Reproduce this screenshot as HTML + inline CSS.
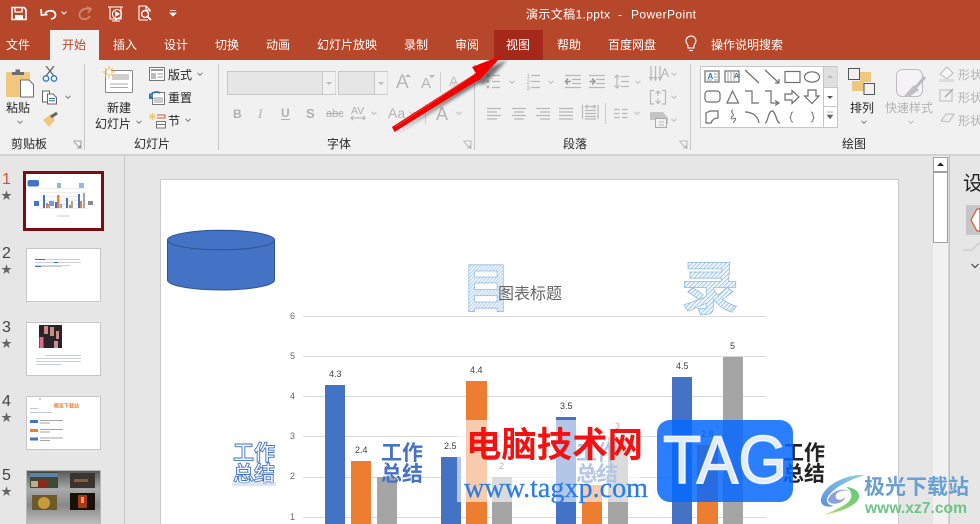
<!DOCTYPE html>
<html lang="zh"><head><meta charset="utf-8"><title>演示文稿1.pptx - PowerPoint</title>
<style>
html,body{margin:0;padding:0;width:980px;height:524px;overflow:hidden;background:#e6e6e6}
svg{display:block;font-family:"Liberation Sans","Noto Sans CJK SC",sans-serif}
.t{font-size:12px;fill:#fff}
.k{font-size:12px;fill:#262626}
.g{font-size:12px;fill:#b4b4b4}
.ic{fill:none;stroke:#6e6e6e;stroke-width:1.2}
.d{fill:none;stroke:#b8b8b8;stroke-width:1.2}
.ax{font-size:9px;fill:#666}
.dl{font-size:9px;fill:#404040}
</style></head><body>
<svg width="980" height="524" viewBox="0 0 980 524" xmlns="http://www.w3.org/2000/svg">
<defs>
<path id="c" d="M-2.5 -1.2L0 1.3L2.5 -1.2" fill="none" stroke="#777" stroke-width="1"/>
<path id="cg" d="M-2.5 -1.2L0 1.3L2.5 -1.2" fill="none" stroke="#bbb" stroke-width="1"/>
<pattern id="h" width="3" height="3" patternUnits="userSpaceOnUse" patternTransform="rotate(45)"><rect width="3" height="3" fill="#f4f8fd"/><rect width="1" height="3" fill="#a4c8ea"/></pattern>
<clipPath id="cl"><rect x="440" y="240" width="320" height="76"/></clipPath>
<clipPath id="r1"><rect x="160" y="180" width="738" height="344"/></clipPath>
<filter id="sh" x="-20%" y="-20%" width="140%" height="140%"><feGaussianBlur stdDeviation="1.6"/></filter>
<linearGradient id="tg" x1="0" y1="0" x2="0" y2="1"><stop offset="0" stop-color="#555"/><stop offset=".35" stop-color="#aaa"/><stop offset=".65" stop-color="#888"/><stop offset="1" stop-color="#c0c0c0"/></linearGradient>
<linearGradient id="sw1" x1="1" y1="0" x2="0" y2="1"><stop offset="0" stop-color="#8fd0ee"/><stop offset="1" stop-color="#5c92d6"/></linearGradient>
<linearGradient id="sw2" x1="1" y1="0" x2="0" y2="1"><stop offset="0" stop-color="#63c77f"/><stop offset=".7" stop-color="#8ed36e"/><stop offset="1" stop-color="#ece66a"/></linearGradient>
</defs>

<!-- chrome -->
<rect width="980" height="60" fill="#b7472a"/>
<rect y="60" width="980" height="94" fill="#f1f1f1"/>
<rect y="154" width="980" height="2" fill="#d2d2d2"/>
<rect y="156" width="980" height="368" fill="#e6e6e6"/>
<rect x="50" y="30" width="49" height="30" fill="#f1f1f1"/>
<rect x="494" y="30" width="49" height="30" fill="#a5291a"/>

<!-- QAT -->
<g fill="none" stroke="#fff" stroke-width="1.6">
<path d="M12 7.5H24L26 9.5V19.500H12Z"/><path d="M15 8V12H22V8" stroke-width="1.3"/><rect x="15" y="15" width="8" height="4.500" fill="#fff" stroke="none"/>
<path d="M45 13.500C48 9.500 55 10 55.500 14.500C55.700 17 54 18.500 51 19" stroke-width="1.800"/><path d="M41 9L41.500 15L47.500 14.500" stroke-width="1.800"/>
</g>
<path d="M61.500 11.500L64 14L66.500 11.500" fill="none" stroke="#fff"/>
<g fill="none" stroke="#cf8672" stroke-width="1.800"><path d="M90 9C82 7 78 13 80 17C82 20 88 20 90 16"/><path d="M87 7L91 9L88 13"/></g>
<g fill="none" stroke="#fff" stroke-width="1.100">
<path d="M108 7H123M110 7V19H121V7M116 19V21M112 21H120"/><circle cx="117" cy="14" r="4.500"/><path d="M115.800 12V16L119 14Z" fill="#fff"/>
<path d="M139 20V6H146L150 10V12M139 20H148M146 6V10H150"/><circle cx="145" cy="14" r="3.400" stroke-width="1.400"/><path d="M147.500 16.500L151 20" stroke-width="1.800"/>
</g>
<path d="M170 10.500H176M170 13H176L173 16Z" fill="#fff" stroke="#fff" stroke-width=".8"/>

<text class="t" x="526" y="18.500" textLength="84">演示文稿1.pptx</text>
<text class="t" x="618" y="18.500">-</text>
<text class="t" x="631" y="18.500" textLength="65">PowerPoint</text>

<!-- tabs -->
<text class="t" x="6" y="49">文件</text>
<text class="t" x="62" y="49" style="fill:#b7472a">开始</text>
<text class="t" x="113" y="49">插入</text>
<text class="t" x="164" y="49">设计</text>
<text class="t" x="215" y="49">切换</text>
<text class="t" x="266" y="49">动画</text>
<text class="t" x="317" y="49">幻灯片放映</text>
<text class="t" x="404" y="49">录制</text>
<text class="t" x="455" y="49">审阅</text>
<text class="t" x="506" y="49">视图</text>
<text class="t" x="557" y="49">帮助</text>
<text class="t" x="608" y="49">百度网盘</text>
<g fill="none" stroke="#fff" stroke-width="1.100"><path d="M688 48V46C688 44 686 43.500 686 41A5 5 0 1 1 696 41C696 43.500 694 44 694 46V48Z"/><path d="M689 50.500H693"/></g>
<text class="t" x="711" y="49">操作说明搜索</text>

<!-- ribbon dividers -->
<g fill="#c6c6c6"><rect x="84" y="64" width="1" height="86"/><rect x="218" y="64" width="1" height="86"/><rect x="474" y="64" width="1" height="86"/><rect x="690" y="64" width="1" height="86"/></g>

<!-- clipboard -->
<rect x="6" y="72" width="24" height="25" rx="1.500" fill="#efc77f"/>
<path d="M12 75V72H15.500V69.500H20V72H24V75Z" fill="#6e6e6e"/>
<path d="M20.500 80H29L33.500 84.500V97H20.500Z" fill="#fff" stroke="#6e6e6e"/>
<text class="k" x="6" y="112">粘贴</text>
<use href="#c" x="20" y="122"/>
<g fill="none"><path d="M46 66L54 76M54 66L46 76" stroke="#666" stroke-width="1.300"/><circle cx="46" cy="78.500" r="2.700" stroke="#2e75b6" stroke-width="1.300"/><circle cx="54" cy="78.500" r="2.700" stroke="#2e75b6" stroke-width="1.300"/></g>
<g fill="#fff" stroke="#666"><path d="M42.500 91H49.500V102H42.500Z"/><path d="M47.500 94H53L56.500 97.500V104H47.500Z"/></g><path d="M49 98.500H55M49 100.800H55" stroke="#2e75b6"/>
<use href="#c" x="68" y="97"/>
<path d="M43 120L51 114L55 120L49 127Z" fill="#efc77f"/><path d="M51 117L57 113" stroke="#666" stroke-width="3"/>
<text class="k" x="11" y="148">剪贴板</text>
<g style="stroke:#888;stroke-width:.8" fill="none"><path d="M73 141H81V149M74 142L80 148M77 148H80V145"/></g>

<!-- slides -->
<rect x="105.500" y="70.500" width="27" height="22" rx="1" fill="#fff" stroke="#888"/>
<rect x="112" y="74" width="17" height="6" fill="#cfcfcf"/><path d="M110 84H128M110 87.500H128" stroke="#aaa"/>
<g stroke="#efc77f" stroke-width="1.500"><path d="M109 66V78M103 72H115M105 68L113 76M113 68L105 76"/></g><circle cx="109" cy="72" r="2.200" fill="#fff"/>
<text class="k" x="107" y="112">新建</text>
<text class="k" x="95" y="128">幻灯片</text>
<use href="#c" x="139" y="122"/>
<g><rect x="149.500" y="67.500" width="15" height="13" fill="#fff" stroke="#777"/><rect x="151" y="69" width="12" height="2" fill="#999"/><rect x="151" y="73" width="5" height="6" fill="#bbb"/><path d="M157.500 74H163M157.500 77H163" stroke="#999"/></g>
<text class="k" x="168" y="79">版式</text><use href="#c" x="200" y="74"/>
<g><rect x="152.500" y="92.500" width="12" height="12" fill="#fff" stroke="#777"/><rect x="154" y="97" width="9" height="6" fill="#ccc"/><path d="M150 97C151 92 157 91 160 93" fill="none" stroke="#2e75b6" stroke-width="1.800"/><path d="M149 93V99H154Z" fill="#2e75b6"/></g>
<text class="k" x="168" y="102">重置</text>
<g stroke="#efc77f" stroke-width="1.100"><path d="M152.500 113V120M149 116.500H156M150 114L155 119M155 114L150 119"/></g>
<g fill="none" stroke="#c55a3a"><path d="M157 115H165V118H157"/></g><rect x="156.500" y="121.500" width="9" height="6.500" fill="#fff" stroke="#777"/>
<path d="M157 124.500H165" stroke="#777"/>
<text class="k" x="168" y="125">节</text><use href="#c" x="188" y="120"/>
<text class="k" x="134" y="148">幻灯片</text>

<!-- font group -->
<rect x="227.500" y="71.500" width="108" height="23" fill="#e6e6e6" stroke="#c8c8c8"/><rect x="322" y="72" width="13.500" height="22" fill="#f1f1f1"/><path d="M322.500 71.500V94.500" stroke="#c8c8c8"/><path d="M326 82H332L329 85Z" fill="#bbb"/>
<rect x="338.500" y="71.500" width="49" height="23" fill="#e6e6e6" stroke="#c8c8c8"/><rect x="374" y="72" width="13.500" height="22" fill="#f1f1f1"/><path d="M374.500 71.500V94.500" stroke="#c8c8c8"/><path d="M378 82H384L381 85Z" fill="#bbb"/>
<text x="396" y="88" font-size="19" fill="#b6b6b6">A</text><path d="M405 77L408 74L411 77Z" fill="#b6b6b6"/>
<text x="421" y="88" font-size="15" fill="#b6b6b6">A</text><path d="M429 75H435L432 78Z" fill="#b6b6b6"/>
<path d="M440.500 72V93" stroke="#d0d0d0"/>
<text x="449" y="86" font-size="14" fill="#bdbdbd">A</text><rect x="452" y="83" width="12" height="4" fill="#ddd"/>
<text x="233" y="118" font-size="12" font-weight="bold" fill="#b0b0b0">B</text>
<text x="258" y="118" font-size="13" font-style="italic" font-family="Liberation Serif" fill="#b0b0b0">I</text>
<text x="281" y="117" font-size="12" font-weight="bold" fill="#b0b0b0">U</text><path d="M281 119.500H290" stroke="#b0b0b0"/>
<text x="306" y="118" font-size="13" font-weight="bold" fill="#b0b0b0">S</text>
<text x="326" y="117" font-size="11" fill="#b0b0b0">abc</text><path d="M326 113.500H343" stroke="#b0b0b0"/>
<text x="351" y="114" font-size="10.500" fill="#b0b0b0">AV</text><path d="M351 118H365M353 116L351 118L353 120M363 116L365 118L363 120" fill="none" stroke="#b0b0b0"/>
<use href="#cg" x="374" y="113"/>
<text x="388" y="118" font-size="14" fill="#b4b4b4">Aa</text>
<use href="#cg" x="412" y="113"/>
<path d="M425.500 104V124" stroke="#d0d0d0"/>
<text x="436" y="120" font-size="18" fill="#b4b4b4">A</text><use href="#cg" x="459" y="113"/>
<text class="k" x="327" y="148">字体</text>
<g style="stroke:#aaa;stroke-width:.8" fill="none"><path d="M463 141H471V149M464 142L470 148M467 148H470V145"/></g>

<!-- paragraph -->
<g fill="#b8b8b8"><circle cx="488" cy="75.500" r="1.500"/><circle cx="488" cy="81.500" r="1.500"/><circle cx="488" cy="87" r="1.500"/></g>
<text x="526.500" y="78" font-size="6" fill="#aaa">1</text><text x="526.500" y="84" font-size="6" fill="#aaa">2</text><text x="526.500" y="90" font-size="6" fill="#aaa">3</text>
<g class="d">
<path d="M492 75.500H500M492 81.500H500M492 87.500H500"/>
<path d="M531 75.500H540M531 81.500H540M531 87.500H540"/>
<path d="M565 75.500H581M572 79.500H581M572 83.500H581M565 87.500H581"/>
<path d="M571 81.500H565.500M568 78.500L565.500 81.500L568 84.500" style="stroke:#999;stroke-width:1.500"/>
<path d="M589 75.500H605M596 79.500H605M596 83.500H605M589 87.500H605"/>
<path d="M589.500 81.500H595M592 78.500L595 81.500L592 84.500" style="stroke:#999;stroke-width:1.500"/>
<path d="M617 75V88M614.500 77.500L617 75L619.500 77.500M614.500 85.500L617 88L619.500 85.500"/>
<path d="M621 76.500H629M621 81.500H629M621 86.500H629"/>
<path d="M487 108.500H501M487 112H497M487 115.500H501M487 119H497"/>
<path d="M512 108.500H526M514 112H524M512 115.500H526M514 119H524"/>
<path d="M536 108.500H550M540 112H550M536 115.500H550M540 119H550"/>
<path d="M559 108.500H573M559 112H573M559 115.500H573M559 119H573"/>
<path d="M582.500 105V119M598 105V119M586 106.500H595M587.500 105L585.500 106.500L587.500 108.500M593.500 105L595.500 106.500L593.500 108.500M585 110.500H596M585 113.500H596M585 116.500H596M585 119H596"/>
<path d="M605.500 103V124" style="stroke:#d0d0d0"/>
<path d="M614 109.500H619.500M622 109.500H627.500M614 113.500H619.500M622 113.500H627.500M614 117.500H619.500M622 117.500H627.500"/>
<path d="M651 66V79M655.500 66V79M660 66V79M649.500 77L651 80L652.500 77M654 77L655.500 80L657 77M658.500 77L660 80L661.500 77"/>
<path d="M654 90.500H650.500V104H654M662 90.500H665.500V104H662M655.500 93.500L658 91L660.500 93.500M658 91.500V96M655.500 101L658 103.500L660.500 101M658 98.500V103"/>
</g>
<text x="661" y="77" font-size="12" fill="#b0b0b0">A</text>
<use href="#cg" x="512" y="82"/><use href="#cg" x="551" y="82"/><use href="#cg" x="638" y="82"/><use href="#cg" x="674" y="74"/><use href="#cg" x="674" y="97"/><use href="#cg" x="637" y="113"/><use href="#cg" x="674" y="120"/>
<path d="M650 112H663L668 118V124H658V120H650Z" fill="#c4c4c4"/><rect x="655.500" y="118.500" width="11" height="9" fill="#f1f1f1" stroke="#aaa"/><path d="M659 122H664M659 125H664" stroke="#bbb"/>
<text class="k" x="563" y="148">段落</text>
<g style="stroke:#aaa;stroke-width:.8" fill="none"><path d="M679 141H687V149M680 142L686 148M683 148H686V145"/></g>

<!-- shapes gallery -->
<rect x="700.500" y="66.500" width="137" height="61" fill="#fff" stroke="#c6c6c6"/>
<rect x="824" y="67" width="13.500" height="20" fill="#e0e0e0"/>
<path d="M823.500 67V127M824 87.500H837M824 106.500H837" stroke="#c6c6c6"/>
<path d="M827 78H833L830 75Z" fill="#bbb"/><path d="M827 96H833L830 99Z" fill="#555"/><path d="M827 112H833M827 115H833L830 119Z" fill="#666" stroke="#666" stroke-width=".5"/>
<g class="ic">
<rect x="705" y="71" width="14" height="11"/><rect x="725" y="71" width="14" height="11"/>
<path d="M745 70L759 83M765 70L779 83M775 83H779V79"/>
<rect x="785" y="71.500" width="15" height="11"/><ellipse cx="812" cy="77" rx="7.500" ry="5.200"/>
<rect x="705" y="91" width="15" height="11" rx="3"/><path d="M727 103L732.500 91L738.500 103Z"/>
<path d="M745 91H752V103H759"/><path d="M765 91H771V103H778M775 100.500L779 103L775 105.500"/>
<path d="M785 94H792V90.500L799 97L792 103.500V100H785Z"/><path d="M808 90H816V96H819L812 103.500L804.500 96H808Z"/>
<path d="M706 113L710 111H718V118C714 118 712 120 711 123H706Z"/>
<path d="M733 110C729 112 735 114 733 116C729 118 732 120 735 118C737 120 733 122 733 123" stroke-width="1"/>
<path d="M745 112C752 112 758 116 759 123"/><path d="M765 123C768 123 768 111 772 111C776 111 776 123 780 123"/>
<path d="M793 112C790 112 792 116 790 117.500C792 119 790 122 793 122" stroke-width="1"/><path d="M811 112C814 112 812 116 814 117.500C812 119 814 122 811 122" stroke-width="1"/>
</g>
<text x="707.500" y="79" font-size="8" font-weight="bold" fill="#2e75b6">A</text><path d="M714 74H718M714 77H718M714 80H718M707 80H712" stroke="#888" stroke-width=".7"/>
<path d="M728 72V81M731 72V81M734 72V81" stroke="#888" stroke-width=".7"/><text x="734" y="78" font-size="7" font-weight="bold" fill="#2e75b6">A</text>

<!-- arrange / quick style -->
<rect x="860" y="72" width="11" height="10" fill="#efc77f"/><rect x="852" y="81" width="12" height="10" fill="#efc77f"/>
<rect x="848.500" y="68.500" width="11" height="11" fill="#f1f1f1" stroke="#555"/><rect x="864" y="83.500" width="10.500" height="11" fill="#f1f1f1" stroke="#555"/>
<text class="k" x="850" y="112">排列</text><use href="#c" x="864" y="122"/>
<rect x="896.500" y="69.500" width="26" height="27" rx="6" fill="#f4f2f6" stroke="#bcbcbc"/>
<path d="M904 96L914 85L919 90L909 97Z" fill="#c0c0c0"/><path d="M916 87L925 77" stroke="#bbb" stroke-width="3"/>
<text class="g" x="885" y="112">快速样式</text><use href="#cg" x="911" y="122"/>
<path d="M940 74L947 67L953 73L947 79Z" fill="#f6f6f6" stroke="#bbb"/><rect x="939" y="79" width="15" height="3" fill="#ddd"/>
<text class="g" x="958" y="79">形状</text>
<path d="M940 90H952V101H940Z" fill="none" stroke="#bbb"/><path d="M945 97L953 89" stroke="#aaa" stroke-width="1.500"/>
<text class="g" x="958" y="102">形状</text>
<path d="M941 121L946 114H954L949 122Z" fill="#eee" stroke="#bbb"/>
<text class="g" x="958" y="125">形状</text>
<text class="k" x="842" y="148">绘图</text>

<!-- thumbnail pane -->
<rect x="124" y="156" width="1" height="368" fill="#c6c6c6"/>
<text x="2" y="184" font-size="16" fill="#d2553b">1</text><text x="1" y="199" font-size="11" fill="#666">★</text>
<text x="2" y="258" font-size="16" fill="#444">2</text><text x="1" y="273" font-size="11" fill="#666">★</text>
<text x="2" y="332" font-size="16" fill="#444">3</text><text x="1" y="347" font-size="11" fill="#666">★</text>
<text x="2" y="406" font-size="16" fill="#444">4</text><text x="1" y="421" font-size="11" fill="#666">★</text>
<text x="2" y="480" font-size="16" fill="#444">5</text><text x="1" y="495" font-size="11" fill="#666">★</text>

<!-- thumb 1 -->
<rect x="24.500" y="172.500" width="78" height="57" fill="#fff" stroke="#7b0c14" stroke-width="3"/>
<rect x="27.500" y="180" width="11.500" height="6.500" rx="2" fill="#4472c4"/>
<g stroke="#ddd" stroke-width=".6"><path d="M39 188.500H87M39 192.500H87M39 196.500H87M39 200.500H87M39 204.500H87M39 208.500H87"/></g>
<rect x="57" y="183" width="4" height="5" fill="#8fb8e4"/><rect x="79" y="183" width="5" height="5" fill="#8fb8e4"/><rect x="34" y="201" width="5" height="5" fill="#4472c4"/><rect x="49" y="201" width="5" height="5" fill="#7a9bd6"/><rect x="88" y="201" width="5" height="4" fill="#888"/>
<g fill="#4472c4"><rect x="43" y="195" width="2" height="13"/><rect x="55" y="202" width="2" height="6"/><rect x="66" y="198" width="2" height="10"/><rect x="78" y="194" width="2" height="14"/></g>
<g fill="#ed7d31"><rect x="46" y="203" width="2" height="5"/><rect x="57" y="195" width="2.500" height="13"/><rect x="69" y="205" width="2" height="3"/><rect x="80" y="201" width="2" height="7"/></g>
<g fill="#a5a5a5"><rect x="48" y="204" width="2" height="4"/><rect x="60" y="204" width="2" height="4"/><rect x="71" y="201" width="2" height="7"/><rect x="83" y="193" width="2" height="15"/></g>
<path d="M57 216H70" stroke="#ccc" stroke-width="1"/>

<!-- thumb 2 -->
<rect x="26.500" y="248.500" width="74" height="53" fill="#fff" stroke="#c6c6c6"/>
<g stroke-width="1"><path d="M35 259.500H80" stroke="#c8cfdb"/><path d="M35 262.500H81" stroke="#c8cfdb"/><path d="M35 265.500H70" stroke="#d2d2d2"/><path d="M35 266.500H62" stroke="#ccc"/><path d="M35 259.500H45M54 262.500H58M35 266.500H41" stroke="#4472c4"/></g>

<!-- thumb 3 -->
<rect x="26.500" y="322.500" width="74" height="53" fill="#fff" stroke="#c6c6c6"/>
<rect x="39" y="325" width="23" height="23" fill="#2a2426"/>
<g fill="#c98b84"><rect x="44" y="326" width="4" height="8"/><rect x="50" y="327" width="4" height="9"/><rect x="56" y="331" width="3" height="8"/></g>
<rect x="39.500" y="337" width="4" height="11" fill="#e06a8a"/><rect x="54" y="341" width="4" height="7" fill="#d18a90"/>
<g stroke="#c8cfdb"><path d="M45 355.500H81M36 358.500H81M36 361.500H81M36 364.500H62"/></g>

<!-- thumb 4 -->
<rect x="26.500" y="396.500" width="74" height="53" fill="#fff" stroke="#c6c6c6"/>
<text x="54" y="407.500" font-size="5" font-weight="bold" fill="#ed7d31">概览下载站</text>
<path d="M30 408.500H38M30 412.500H52" stroke="#c0c6d6"/>
<path d="M39 399H41" stroke="#ccc" stroke-width="2"/>
<g><rect x="30" y="420" width="8" height="3" fill="#4472c4"/><path d="M40 420.500H63M40 423H50" stroke="#888" stroke-width=".8"/>
<rect x="30" y="429" width="8" height="3" fill="#ed7d31"/><path d="M40 429.500H63M40 432H50" stroke="#888" stroke-width=".8"/>
<rect x="30" y="437.500" width="8" height="3" fill="#4472c4"/><path d="M40 438H63M40 440.500H50" stroke="#888" stroke-width=".8"/></g>

<!-- thumb 5 -->
<rect x="26.500" y="470.500" width="74" height="53.500" fill="url(#tg)" stroke="#b8b8b8"/>
<rect x="30" y="472" width="28" height="16" fill="#3d4a32"/><rect x="30" y="473" width="28" height="4" fill="#5f7fa8"/><rect x="38" y="480" width="10" height="7" fill="#8a2a1a"/><rect x="31" y="481" width="7" height="6" fill="#b8b090"/>
<rect x="70" y="473" width="25" height="15" fill="#3a3330"/><rect x="74" y="479" width="14" height="3" fill="#8a5a3a"/>
<rect x="32" y="495" width="25" height="15" fill="#6d5a2a"/><circle cx="44" cy="503" r="6" fill="#c99a3a"/>
<rect x="70" y="493" width="25" height="17" fill="#161208"/><rect x="78" y="495" width="9" height="13" fill="#a8361a"/><rect x="81" y="497" width="3" height="6" fill="#e8a040"/>

<!-- slide -->
<rect x="160.500" y="179.500" width="738" height="345" fill="#fff" stroke="#cbcbcb"/>
<g clip-path="url(#r1)">
<path d="M167.500 240V280C167.500 285.500 191 290 221 290C251 290 274.500 285.500 274.500 280V240Z" fill="#4472c4" stroke="#2f528f"/>
<ellipse cx="221" cy="240" rx="53.500" ry="9.800" fill="#4472c4" stroke="#2f528f"/>

<!-- outline title chars -->
<g clip-path="url(#cl)">
<text transform="translate(462 307) scale(.78 .85)" font-size="62" font-weight="bold" fill="url(#h)" stroke="#8fbbe6" stroke-width="1">目</text>
<text x="681" y="309" font-size="58" fill="url(#h)" stroke="#8fbbe6" stroke-width=".8" font-weight="bold">录</text>
</g>
<text x="498" y="299" font-size="16" fill="#666">图表标题</text>

<!-- grid -->
<g stroke="#d9d9d9"><path d="M303 316.500H766M303 356.500H766M303 396.500H766M303 436.500H766M303 477.500H766M303 517.500H766"/></g>
<text class="ax" x="290" y="319">6</text><text class="ax" x="290" y="359">5</text><text class="ax" x="290" y="399">4</text><text class="ax" x="290" y="439">3</text><text class="ax" x="290" y="479">2</text><text class="ax" x="290" y="520">1</text>

<!-- bars -->
<g fill="#4472c4"><rect x="325" y="385" width="20" height="139"/><rect x="441" y="457" width="20" height="67"/><rect x="556" y="417" width="20" height="107"/><rect x="672" y="377" width="20" height="147"/></g>
<g fill="#ed7d31"><rect x="351" y="461" width="20" height="63"/><rect x="466" y="381" width="21" height="143"/><rect x="582" y="485" width="20" height="39"/><rect x="697" y="445" width="21" height="79"/></g>
<g fill="#a5a5a5"><rect x="377" y="477" width="20" height="47"/><rect x="492" y="477" width="20" height="47"/><rect x="608" y="437" width="20" height="87"/><rect x="723" y="357" width="20" height="167"/></g>

<text class="dl" x="329" y="377">4.3</text><text class="dl" x="355" y="453">2.4</text><text class="dl" x="384" y="469">2</text>
<text class="dl" x="444" y="449">2.5</text><text class="dl" x="470" y="373">4.4</text><text class="dl" x="499" y="469">2</text>
<text class="dl" x="560" y="409">3.5</text><text class="dl" x="586" y="477">1.8</text><text class="dl" x="615" y="429">3</text>
<text class="dl" x="676" y="369">4.5</text><text class="dl" x="701" y="437">2.8</text><text class="dl" x="730" y="349">5</text>

<!-- 工作总结 blocks -->
<g font-size="21" font-weight="bold">
<g fill="#f4f8fd" stroke="#4472c4" stroke-width=".9"><text x="233" y="460">工作</text><text x="233" y="481">总结</text></g>
<g fill="#4472c4"><text x="381" y="460">工作</text><text x="381" y="481">总结</text></g>
<g fill="#4472c4"><text x="576" y="460">工作</text><text x="576" y="481">总结</text></g>
<g fill="#222"><text x="783" y="460">工作</text><text x="783" y="481">总结</text></g>
</g>
<rect x="232" y="482" width="44" height="4" fill="#c6d5ee" opacity=".6"/>

<!-- watermark -->
<rect x="457" y="420" width="183" height="82" fill="#fff" fill-opacity=".6"/>
</g>
<text x="466" y="457" font-size="35" font-weight="bold" fill="#f21212" font-family="Noto Sans CJK SC,sans-serif" textLength="177" lengthAdjust="spacingAndGlyphs">电脑技术网</text>
<text x="464" y="497" font-size="29" fill="#2a7de8" stroke="#2a7de8" stroke-width=".3" font-family="Liberation Serif,serif" textLength="184" lengthAdjust="spacingAndGlyphs">www.tagxp.com</text>
<rect x="657" y="420" width="136" height="82" rx="13" fill="#0669ff" fill-opacity=".85"/>
<text x="663" y="483" font-size="68" fill="#fff" stroke="#fff" stroke-width="1.500" fill-opacity=".86" stroke-opacity=".86" textLength="124" lengthAdjust="spacingAndGlyphs">TAG</text>

<!-- scroll + right panel -->
<rect x="933" y="156" width="16" height="368" fill="#f1f1f1"/>
<rect x="933.500" y="157.500" width="14" height="14" fill="#fff" stroke="#a0a0a0"/><path d="M937 166H944L940.500 162.500Z" fill="#222"/>
<rect x="933.500" y="172.500" width="14" height="70" fill="#fff" stroke="#a0a0a0"/>
<rect x="948.500" y="156" width="1.500" height="368" fill="#c0c0c0"/>
<text x="963" y="190" font-size="20" fill="#222">设</text>
<rect x="966" y="205" width="14" height="30" fill="#c6c6c6"/>
<path d="M971 220L977 209H980V231H977Z" fill="#fff" stroke="#e0573a" stroke-width="1.300"/>
<path d="M963 250H972L980 242" fill="none" stroke="#c4c4c4"/>
<path d="M971.500 264L975 267.500L978.500 264" fill="none" stroke="#444" stroke-width="1.200"/>

<!-- red arrow -->
<path d="M396 134L478 84L485 84L507 60L476 72L481 75Z" fill="#222" opacity=".6" filter="url(#sh)"/>
<path d="M392 127L394.500 132L475 82L480 79.500L503 55L472 67L476 73Z" fill="#f00000"/>
<path d="M395 127L475 74" stroke="#ff5a5a" stroke-width="1" opacity=".6"/>

<!-- xz7 logo -->
<path d="M865 475C846 474 824 485 821 499C820 505 826 508 834 506C826 505 825 499 830 494C838 485 852 479 865 475Z" fill="url(#sw1)"/>
<path d="M828 500C830 492 842 487 849 491C840 489 834 494 836 498C838 501 843 500 845 497C845 503 830 507 828 500Z" fill="#8c9fd8"/>
<path d="M846 487C860 488 863 498 854 504C846 510 834 513 824 515C834 510 846 506 850 500C853 495 851 490 846 487Z" fill="url(#sw2)"/>
<text x="864" y="494" font-size="21" font-weight="bold" fill="#6a9fd3" textLength="105">极光下载站</text>
<text x="865" y="513" font-size="16" fill="#6ec486" font-weight="bold" textLength="102" lengthAdjust="spacingAndGlyphs">www.xz7.com</text>
</svg>
</body></html>
